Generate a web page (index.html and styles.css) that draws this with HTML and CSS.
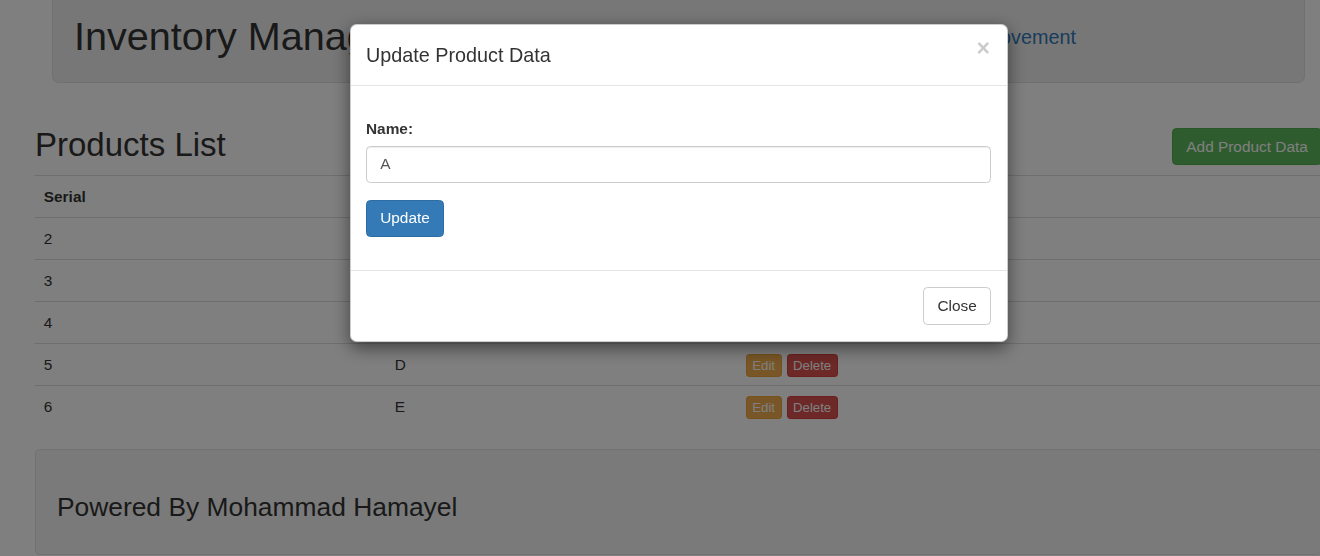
FILE: index.html
```html
<!DOCTYPE html>
<html lang="en">
<head>
<meta charset="utf-8">
<title>Inventory Management</title>
<link rel="stylesheet" href="styles.css">
</head>
<body>
<div class="page">
  <header class="jumbotron">
    <h1 class="brand">Inventory Management</h1>
    <nav class="nav">
      <a class="nav-link">Products</a>
      <a class="nav-link">Locations</a>
      <a class="nav-link">Product Movement</a>
    </nav>
  </header>

  <section class="products">
    <div class="products-head">
      <h2 class="products-title">Products List</h2>
      <button class="btn btn-success">Add Product Data</button>
    </div>
    <table class="table">
      <thead>
        <tr><th class="col-serial">Serial</th><th class="col-name">Product Name</th><th>Action</th></tr>
      </thead>
      <tbody>
        <tr><td>2</td><td>A</td><td><div class="actions"><button class="btn btn-xs btn-warning">Edit</button><button class="btn btn-xs btn-danger">Delete</button></div></td></tr>
        <tr><td>3</td><td>B</td><td><div class="actions"><button class="btn btn-xs btn-warning">Edit</button><button class="btn btn-xs btn-danger">Delete</button></div></td></tr>
        <tr><td>4</td><td>C</td><td><div class="actions"><button class="btn btn-xs btn-warning">Edit</button><button class="btn btn-xs btn-danger">Delete</button></div></td></tr>
        <tr><td>5</td><td>D</td><td><div class="actions"><button class="btn btn-xs btn-warning">Edit</button><button class="btn btn-xs btn-danger">Delete</button></div></td></tr>
        <tr><td>6</td><td>E</td><td><div class="actions"><button class="btn btn-xs btn-warning">Edit</button><button class="btn btn-xs btn-danger">Delete</button></div></td></tr>
      </tbody>
    </table>
  </section>

  <footer class="well">
    <h3 class="powered">Powered By Mohammad Hamayel</h3>
  </footer>
</div>

<div class="backdrop"></div>

<div class="modal-dialog">
  <div class="modal-content">
    <div class="modal-header">
      <button class="close" aria-label="Close">&times;</button>
      <h4 class="modal-title">Update Product Data</h4>
    </div>
    <div class="modal-body">
      <form class="form">
        <div class="form-group">
          <label class="label" for="name">Name:</label>
          <input class="form-control" id="name" type="text" value="A">
        </div>
        <div class="form-group">
          <button type="button" class="btn btn-primary">Update</button>
        </div>
      </form>
    </div>
    <div class="modal-footer">
      <button class="btn btn-default">Close</button>
    </div>
  </div>
</div>
</body>
</html>
```

FILE: styles.css
```css
* { box-sizing: border-box; }

html, body {
  margin: 0;
  padding: 0;
  overflow: hidden;
  background: #fff;
}

body {
  font-family: "Liberation Sans", Arial, Helvetica, sans-serif;
  font-size: 15.4px;
  line-height: 22px;
  color: #333;
  height: 556px;
}

.page {
  width: 1287px;
  margin-left: 35px;
}

/* Jumbotron header */
.jumbotron {
  display: flex;
  align-items: flex-start;
  margin: -20px 17px 0;
  padding: 33.5px 22px 24px 21px;
  background: #eee;
  border: 1px solid #e0e0e0;
  border-radius: 6.6px;
}

.brand {
  margin: 0;
  font-size: 39.6px;
  line-height: 43.56px;
  font-weight: 400;
  white-space: nowrap;
}

.nav {
  display: flex;
  gap: 22px;
  margin-left: auto;
  margin-right: 206px;
  margin-top: 8.5px;
  font-size: 19.8px;
  line-height: 28.3px;
}

.nav-link {
  color: #337ab7;
  text-decoration: none;
  white-space: nowrap;
}

/* Products */
.products {
  margin-top: 44px;
}

.products-head {
  display: flex;
  justify-content: space-between;
  align-items: flex-start;
  height: 38px;
}

.products-title {
  margin: 0;
  font-size: 33px;
  line-height: 36.3px;
  font-weight: 400;
}

.products-head .btn-success {
  margin-top: 1px;
}

.table {
  width: 100%;
  margin-top: 10px;
  margin-bottom: 22px;
  border-collapse: collapse;
}

.table th,
.table td {
  padding: 9.5px 8.8px;
  line-height: 22px;
  text-align: left;
  vertical-align: top;
  border-top: 1px solid #ddd;
}

.table th { font-weight: 700; }

.col-serial, .col-name { width: 351px; }

.actions {
  display: flex;
  align-items: center;
  gap: 5px;
  height: 22px;
}

/* Buttons */
.btn {
  display: inline-block;
  font-family: inherit;
  font-size: 15.4px;
  line-height: 22px;
  padding: 6.6px 13.2px;
  border: 1px solid transparent;
  border-radius: 4.4px;
  color: #fff;
  cursor: pointer;
  white-space: nowrap;
}

.btn-xs {
  font-size: 13.2px;
  line-height: 19px;
  padding: 1px 5.5px;
  border-radius: 3.3px;
  margin-top: 1px;
}

.btn-success { background: #5cb85c; border-color: #4cae4c; }
.btn-warning { background: #f0ad4e; border-color: #eea236; }
.btn-danger  { background: #d9534f; border-color: #d43f3a; }
.btn-primary { background: #337ab7; border-color: #2e6da4; }
.btn-default { background: #fff; border-color: #ccc; color: #333; }

/* Footer well */
.well {
  padding: 20.9px;
  background: #f5f5f5;
  border: 1px solid #e3e3e3;
  border-radius: 4.4px;
}

.powered {
  margin: 22px 0 11px;
  font-size: 26.4px;
  line-height: 29px;
  font-weight: 400;
}

/* Modal */
.backdrop {
  position: fixed;
  inset: 0;
  background: rgba(0, 0, 0, 0.5);
}

.modal-dialog {
  position: fixed;
  top: 24px;
  left: 350px;
  width: 658px;
}

.modal-content {
  background: #fff;
  border: 1px solid rgba(0, 0, 0, 0.2);
  border-radius: 6.6px;
  box-shadow: 0 5.5px 16.5px rgba(0, 0, 0, 0.5);
}

.modal-header {
  padding: 16px 16px 16px 15px;
  border-bottom: 1px solid #e5e5e5;
}

.modal-title {
  margin: 0;
  font-size: 19.8px;
  line-height: 28.3px;
  font-weight: 400;
}

.close {
  float: right;
  margin-top: -7px;
  margin-right: 1px;
  padding: 0;
  border: 0;
  background: transparent;
  font-family: inherit;
  font-size: 23.1px;
  font-weight: 700;
  line-height: 28px;
  color: #000;
  opacity: 0.2;
  cursor: pointer;
}

.modal-body {
  padding: 16.5px 16px 16.5px 15px;
}

.form {
  padding-top: 15.5px;
}

.form-group {
  margin-bottom: 16.5px;
}

.label {
  display: block;
  margin-bottom: 5.5px;
  font-weight: 700;
}

.form-control {
  display: block;
  width: 100%;
  height: 37.4px;
  padding: 6.6px 13.2px;
  font-family: inherit;
  font-size: 15.4px;
  line-height: 22px;
  color: #555;
  background: #fff;
  border: 1px solid #ccc;
  border-radius: 4.4px;
  box-shadow: inset 0 1px 1px rgba(0, 0, 0, 0.075);
}

.modal-footer {
  padding: 16.5px 16px 16.5px 15px;
  text-align: right;
  border-top: 1px solid #e5e5e5;
}
```
